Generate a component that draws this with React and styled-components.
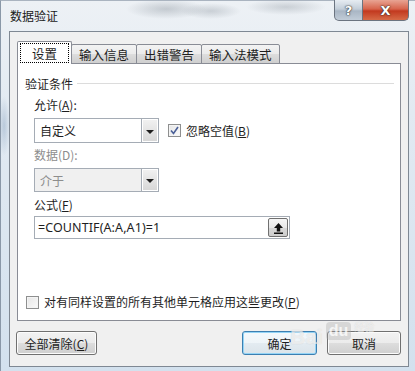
import React from "react";
import styled, { createGlobalStyle } from "styled-components";

const Global = createGlobalStyle`
  html, body { margin: 0; padding: 0; background: #dfe8f1; }
  body { font-family: "Noto Sans", "Noto Sans CJK SC", sans-serif; font-size: 12px; color: #1e1e1e; }
  * { box-sizing: border-box; }
`;

const Frame = styled.div`
  width: 415px;
  height: 371px;
  display: flex;
  flex-direction: column;
  background:
    radial-gradient(ellipse 40px 10px at 165px 8px, rgba(120,130,140,0.35), transparent),
    radial-gradient(ellipse 30px 8px at 210px 10px, rgba(120,130,140,0.3), transparent),
    radial-gradient(ellipse 40px 8px at 285px 6px, rgba(120,130,140,0.3), transparent),
    radial-gradient(ellipse 6px 30px at 3px 125px, rgba(110,140,175,0.35), transparent),
    linear-gradient(180deg, #edf1f5 0%, #e2eaf2 30%, #d3e1ee 100%);
  border-left: 1px solid #8a98a8;
  border-top: 1px solid #aab4c0;
`;

const TitleBar = styled.div`
  height: 30px;
  display: flex;
  align-items: flex-start;
  justify-content: space-between;
  padding: 0 6px 0 9px;
`;

const Title = styled.div`
  margin-top: 7px;
  font-family: "Noto Sans CJK SC", sans-serif;
  font-size: 12px;
  color: #1a1a1a;
  line-height: 16px;
`;

const Controls = styled.div`
  display: flex;
  margin-top: -1px;
`;

const CtrlBtn = styled.div`
  width: ${(p) => p.$w}px;
  height: 21px;
  display: flex;
  align-items: center;
  justify-content: center;
  border: 1px solid #6b7480;
  border-top: none;
  color: #fff;
  font-family: "DejaVu Sans", sans-serif;
  font-weight: bold;
  font-size: 13px;
  text-shadow: 0 0 2px #333, 0 0 1px #000;
  background: ${(p) =>
    p.$close
      ? "linear-gradient(180deg, #e8a493 0%, #d7644c 45%, #c2391f 55%, #d66a46 100%)"
      : "linear-gradient(180deg, #e6ecf2 0%, #c3ced9 45%, #a9b6c4 55%, #c1ccd8 100%)"};
  border-radius: ${(p) => (p.$close ? "0 0 5px 0" : "0 0 0 5px")};
  ${(p) => (p.$close ? "border-left: none;" : "")}
`;

const Body = styled.div`
  margin: 0 6px 4px 8px;
  flex: 1;
  background: #f0f0f0;
  border: 1px solid #7f8893;
  padding: 9px 7px 10px 7px;
  display: flex;
  flex-direction: column;
`;

const TabRow = styled.div`
  display: flex;
  align-items: flex-end;
  height: 23px;
  position: relative;
  z-index: 1;
  margin-bottom: -1px;
`;

const Tab = styled.div`
  height: ${(p) => (p.$active ? 23 : 20)}px;
  padding: 0 ${(p) => (p.$active ? 3 : 7)}px;
  display: flex;
  align-items: center;
  font-family: "Noto Sans CJK SC", sans-serif;
  font-size: 12.5px;
  color: #1e1e1e;
  border: 1px solid #898c95;
  border-bottom: ${(p) => (p.$active ? "none" : "1px solid #898c95")};
  margin-left: -1px;
  background: ${(p) =>
    p.$active ? "#ffffff" : "linear-gradient(180deg, #f3f3f3 0%, #ebebeb 50%, #dddddd 51%, #cfcfcf 100%)"};
  position: relative;
  z-index: ${(p) => (p.$active ? 2 : 1)};
  border-radius: 2px 2px 0 0;
  &:first-child { margin-left: 0; }
`;

const FocusLabel = styled.span`
  outline: 1px dotted #000;
  padding: 1px 11px 0;
  line-height: 17px;
`;

const Panel = styled.div`
  height: 258px;
  background: #fff;
  border: 1px solid #898c95;
  padding: 10px 0 0 7px;
  display: flex;
  flex-direction: column;
`;

const GroupHead = styled.div`
  display: flex;
  align-items: center;
  height: 18px;
  margin-right: 6px;
  font-family: "Noto Sans CJK SC", sans-serif;
  &::after {
    content: "";
    flex: 1;
    height: 1px;
    background: #dcdcdc;
    margin-left: 4px;
  }
`;

const Indent = styled.div`
  padding-left: 9px;
  display: flex;
  flex-direction: column;
`;

const Label = styled.div`
  font-family: "Noto Sans CJK SC", sans-serif;
  line-height: 16px;
  color: ${(p) => (p.$disabled ? "#8d8d8d" : "#1e1e1e")};
  margin-top: ${(p) => p.$mt}px;
  u { text-decoration: underline; }
`;

const Row = styled.div`
  display: flex;
  align-items: center;
  margin-top: ${(p) => p.$mt}px;
`;

const Combo = styled.div`
  width: 125px;
  height: ${(p) => p.$h}px;
  border: 1px solid #a5acb5;
  background: ${(p) => (p.$disabled ? "#f0f0f0" : "#fff")};
  display: flex;
  align-items: center;
  justify-content: space-between;
  padding-left: 5px;
  font-family: "Noto Sans CJK SC", sans-serif;
  color: ${(p) => (p.$disabled ? "#8d8d8d" : "#1e1e1e")};
`;

const DropBtn = styled.div`
  width: 17px;
  height: 100%;
  border-left: 1px solid #a5acb5;
  background: linear-gradient(180deg, #f2f2f2 0%, #e4e4e4 50%, #d6d6d6 100%);
  display: flex;
  align-items: center;
  justify-content: center;
  box-shadow: inset 0 0 0 1px #fff;
`;

const Arrow = styled.div`
  width: 0;
  height: 0;
  border-left: 4px solid transparent;
  border-right: 4px solid transparent;
  border-top: 4px solid #1e1e1e;
  margin-top: 2px;
`;

const Check = styled.div`
  width: 13px;
  height: 13px;
  border: 1px solid #8e8f8f;
  background: linear-gradient(135deg, #e6e6e6 0%, #fafafa 100%);
  display: flex;
  align-items: center;
  justify-content: center;
  margin-right: 5px;
  margin-left: ${(p) => p.$ml || 0}px;
  box-shadow: inset 0 0 0 1px #f4f4f4;
`;

const CheckLabel = styled.span`
  font-family: "Noto Sans CJK SC", sans-serif;
  line-height: 16px;
`;

const FormulaBox = styled.div`
  width: 256px;
  height: 23px;
  border: 1px solid #a5acb5;
  display: flex;
  align-items: center;
  justify-content: space-between;
  padding: 0 1px 0 3px;
  font-family: "Noto Sans", sans-serif;
  font-size: 12.5px;
  letter-spacing: 0.1px;
`;

const RefBtn = styled.div`
  width: 20px;
  height: 19px;
  border: 1px solid #707070;
  border-radius: 2px;
  background: linear-gradient(180deg, #f6f6f6 0%, #e8e8e8 50%, #d8d8d8 51%, #cdcdcd 100%);
  display: flex;
  align-items: center;
  justify-content: center;
`;

const Spacer = styled.div`
  flex: 1;
`;

const BottomRow = styled.div`
  display: flex;
  align-items: center;
  height: 16px;
  margin-bottom: 10px;
  padding-left: 1px;
`;

const ButtonRow = styled.div`
  display: flex;
  align-items: center;
  margin-top: 10px;
  margin-left: -1px;
  gap: 10px;
`;

const Button = styled.div`
  width: ${(p) => p.$w}px;
  height: 24px;
  border: 1px solid ${(p) => (p.$default ? "#3c7fb1" : "#707070")};
  border-radius: 3px;
  display: flex;
  align-items: center;
  justify-content: center;
  font-family: "Noto Sans CJK SC", sans-serif;
  color: #1e1e1e;
  background: ${(p) =>
    p.$default
      ? "linear-gradient(180deg, #f4f9fc 0%, #eef4f8 50%, #e3ebf1 51%, #dbe4ea 100%)"
      : "linear-gradient(180deg, #f2f2f2 0%, #ebebeb 50%, #dddddd 51%, #cfcfcf 100%)"};
  box-shadow: inset 0 0 0 1px ${(p) => (p.$default ? "#94d4f6" : "#fcfcfc")};
`;

const Watermark = styled.div`
  position: absolute;
  left: 290px;
  top: 319px;
  display: flex;
  align-items: flex-start;
  gap: 3px;
  pointer-events: none;
`;

const WmLogo = styled.span`
  font-family: "Liberation Sans", sans-serif;
  font-weight: bold;
  font-size: 21px;
  line-height: 24px;
  margin-top: 6px;
  color: rgba(255, 255, 255, 0.6);
  text-shadow: 0 0 1px rgba(140, 140, 140, 0.35);
`;

const WmDu = styled.span`
  font-family: "Liberation Sans", sans-serif;
  font-weight: bold;
  font-size: 16px;
  line-height: 18px;
  padding: 0 3px;
  margin-top: 3px;
  border-radius: 4px;
  color: rgba(255, 255, 255, 0.75);
  background: rgba(170, 170, 170, 0.35);
`;

const WmText = styled.span`
  font-family: "Noto Sans CJK SC", sans-serif;
  font-size: 10px;
  line-height: 12px;
  margin-top: 2px;
  color: rgba(255, 255, 255, 0.6);
  text-shadow: 0 0 1px rgba(140, 140, 140, 0.35);
`;

const Root = styled.div`
  position: relative;
  width: 415px;
  height: 371px;
  overflow: hidden;
`;

export default function App() {
  return (
    <Root>
      <Global />
      <Frame>
        <TitleBar>
          <Title>数据验证</Title>
          <Controls>
            <CtrlBtn $w={29}>?</CtrlBtn>
            <CtrlBtn $w={46} $close>
              X
            </CtrlBtn>
          </Controls>
        </TitleBar>
        <Body>
          <TabRow>
            <Tab $active>
              <FocusLabel>设置</FocusLabel>
            </Tab>
            <Tab>输入信息</Tab>
            <Tab>出错警告</Tab>
            <Tab>输入法模式</Tab>
          </TabRow>
          <Panel>
            <GroupHead>验证条件</GroupHead>
            <Indent>
              <Label $mt={5}>
                允许(<u>A</u>):
              </Label>
              <Row $mt={5}>
                <Combo $h={25}>
                  自定义
                  <DropBtn>
                    <Arrow />
                  </DropBtn>
                </Combo>
                <Check $ml={9}>
                  <svg width="9" height="9" viewBox="0 0 9 9">
                    <path d="M1 4.5 L3.5 7.5 L8 1" fill="none" stroke="#4a5f97" strokeWidth="1.6" />
                  </svg>
                </Check>
                <CheckLabel>
                  忽略空值(<u>B</u>)
                </CheckLabel>
              </Row>
              <Label $mt={4} $disabled>
                数据(D):
              </Label>
              <Row $mt={5}>
                <Combo $h={24} $disabled>
                  介于
                  <DropBtn>
                    <Arrow />
                  </DropBtn>
                </Combo>
              </Row>
              <Label $mt={5}>
                公式(<u>F</u>)
              </Label>
              <Row $mt={3}>
                <FormulaBox>
                  =COUNTIF(A:A,A1)=1
                  <RefBtn>
                    <svg width="11" height="12" viewBox="0 0 11 12">
                      <path d="M5.5 1 L1 6 H3.8 V9.5 H7.2 V6 H10 Z" fill="#111" />
                      <rect x="1" y="10.5" width="9" height="1.5" fill="#111" />
                    </svg>
                  </RefBtn>
                </FormulaBox>
              </Row>
            </Indent>
            <Spacer />
            <BottomRow>
              <Check />
              <CheckLabel>
                对有同样设置的所有其他单元格应用这些更改(<u>P</u>)
              </CheckLabel>
            </BottomRow>
          </Panel>
          <ButtonRow>
            <Button $w={81}>
              全部清除(<u>C</u>)
            </Button>
            <Spacer />
            <Button $w={75} $default>
              确定
            </Button>
            <Button $w={74}>取消</Button>
          </ButtonRow>
        </Body>
      </Frame>
      <Watermark>
        <WmLogo>Bai</WmLogo>
        <WmDu>du</WmDu>
        <WmText>经验</WmText>
      </Watermark>
    </Root>
  );
}
